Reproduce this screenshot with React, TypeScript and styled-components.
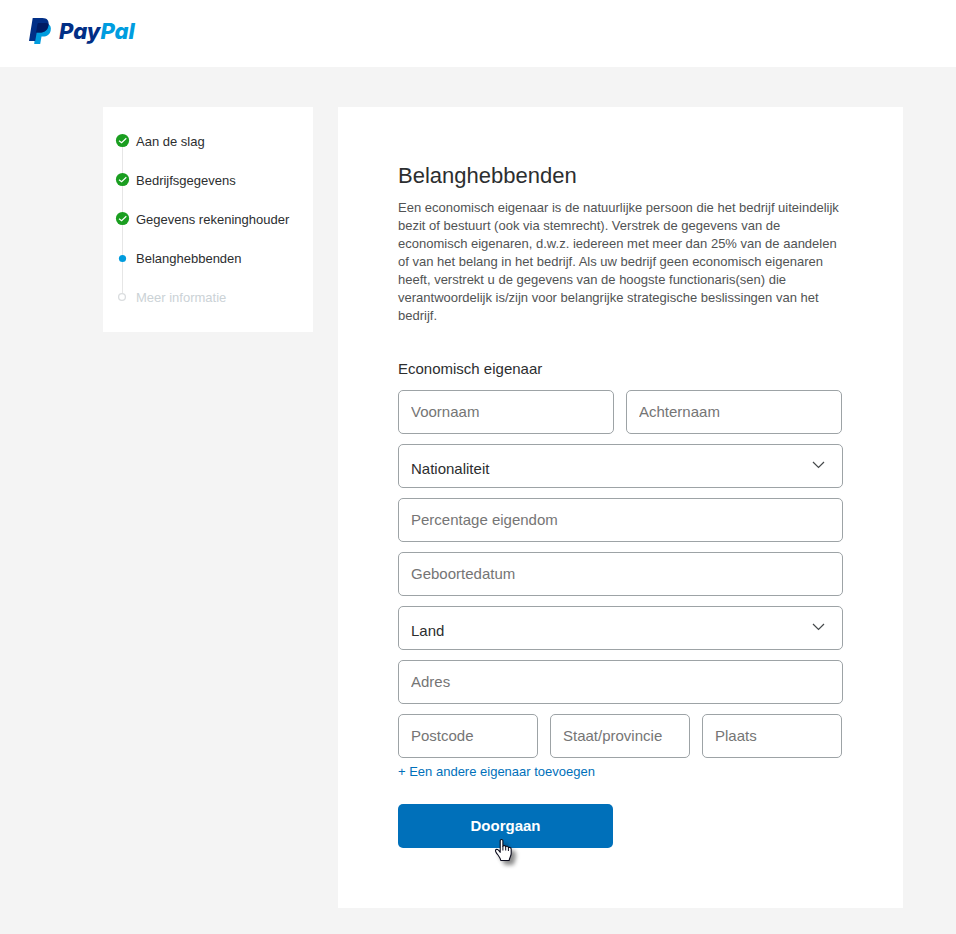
import React, { useState } from "react";
import styled, { createGlobalStyle } from "styled-components";

const GlobalStyle = createGlobalStyle`
  *, *::before, *::after { box-sizing: border-box; }
  body {
    margin: 0;
    background: #f4f4f4;
    color: #2c2e2f;
    font-family: "Liberation Sans", Arial, Helvetica, sans-serif;
    font-size: 15px;
  }
`;

const Header = styled.header`
  display: flex;
  align-items: center;
  height: 67px;
  padding: 0 28px 6px;
  background: #fff;
`;

const Brand = styled.a`
  display: flex;
  align-items: center;
  gap: 7px;
  text-decoration: none;
`;

const Wordmark = styled.span`
  font: italic 800 22px/28px Inter, "Open Sans", sans-serif;
  color: #012f86;
`;

const WordmarkAccent = styled.span`
  color: #009ddf;
`;

const Layout = styled.div`
  display: flex;
  align-items: flex-start;
  gap: 25px;
  padding: 40px 53px 26px 103px;
`;

const Sidebar = styled.nav`
  flex: 0 0 210px;
  padding: 15px 12px;
  background: #fff;
`;

const StepList = styled.ol`
  margin: 0;
  padding: 0;
  list-style: none;
`;

type StepState = "done" | "current" | "upcoming";

const Step = styled.li<{ $state: StepState }>`
  position: relative;
  display: flex;
  align-items: center;
  gap: 6px;
  height: 39px;
  font-size: 13px;
  color: ${(p) => (p.$state === "upcoming" ? "#cbd2d6" : "#2c2e2f")};

  &:not(:last-child)::after {
    content: "";
    position: absolute;
    left: 7px;
    top: 19px;
    width: 1px;
    height: 100%;
    background: #e6e6e6;
  }
`;

const Marker = styled.svg`
  position: relative;
  z-index: 1;
  flex: none;
  width: 15px;
  height: 15px;
  margin: 0 0 2px;
`;

const StepLabel = styled.span`
  line-height: 18px;
`;

const Panel = styled.main`
  flex: 1;
  min-width: 0;
  padding: 54px 60px 60px;
  background: #fff;
`;

const Title = styled.h1`
  margin: 0 0 8px;
  font-size: 22px;
  line-height: 30px;
  font-weight: 400;
`;

const Intro = styled.p`
  margin: 0;
  font-size: 13px;
  line-height: 18px;
  color: #515354;
`;

const OwnerGroup = styled.fieldset`
  display: grid;
  gap: 10px;
  min-width: 0;
  margin: 34px 0 0;
  padding: 0;
  border: 0;
`;

const GroupTitle = styled.legend`
  padding: 0;
  margin-bottom: 11px;
  font-size: 15px;
  line-height: 20px;
`;

const FieldRow = styled.div<{ $columns: number }>`
  display: grid;
  grid-template-columns: repeat(${(p) => p.$columns}, minmax(0, 1fr));
  gap: 12px;
  padding-right: 1px;
`;

const TextInput = styled.input`
  width: 100%;
  height: 44px;
  padding: 0 12px 2px;
  border: 1px solid #9da3a6;
  border-radius: 5px;
  background: #fff;
  color: #2c2e2f;
  font: inherit;

  &::placeholder {
    color: #757575;
    opacity: 1;
  }
`;

const SelectShell = styled.div`
  display: grid;
  align-items: center;
`;

const SelectInput = styled.select`
  grid-area: 1 / 1;
  width: 100%;
  height: 44px;
  padding: 5px 40px 0 12px;
  border: 1px solid #9da3a6;
  border-radius: 5px;
  background: #fff;
  color: #2c2e2f;
  font: inherit;
  appearance: none;
`;

const Chevron = styled.svg`
  grid-area: 1 / 1;
  justify-self: end;
  width: 14px;
  height: 10px;
  margin: 0 17px 2px 0;
  pointer-events: none;
`;

const AddOwner = styled.a`
  display: table;
  margin-top: 4px;
  font-size: 13px;
  line-height: 20px;
  color: #0070ba;
  text-decoration: none;
`;

const SubmitArea = styled.div`
  position: relative;
  width: 215px;
  margin-top: 22px;
`;

const SubmitButton = styled.button`
  display: block;
  width: 100%;
  height: 44px;
  padding: 0;
  border: 0;
  border-radius: 5px;
  background: #0070ba;
  color: #fff;
  font: 700 15px/20px "Liberation Sans", Arial, sans-serif;
  cursor: pointer;
`;

const Pointer = styled.svg`
  position: absolute;
  left: 96px;
  top: 34px;
  width: 28px;
  height: 32px;
  pointer-events: none;
  overflow: visible;
  filter: drop-shadow(4px 4px 2px rgba(0, 0, 0, 0.45));
`;

const steps: { label: string; state: StepState }[] = [
  { label: "Aan de slag", state: "done" },
  { label: "Bedrijfsgegevens", state: "done" },
  { label: "Gegevens rekeninghouder", state: "done" },
  { label: "Belanghebbenden", state: "current" },
  { label: "Meer informatie", state: "upcoming" },
];

function StepMarker({ state }: { state: StepState }) {
  return (
    <Marker viewBox="0 0 15 15" aria-hidden="true">
      {state === "done" && (
        <>
          <circle cx="7.5" cy="7.5" r="6.6" fill="#1a9e20" />
          <path d="M4 7.7 6.6 9.7 11.3 5.3" fill="none" stroke="#fff" strokeWidth="1.2" />
        </>
      )}
      {state === "current" && <circle cx="7.5" cy="8.5" r="3.6" fill="#009cde" />}
      {state === "upcoming" && (
        <circle cx="7" cy="8" r="3.4" fill="#fff" stroke="#dadddf" strokeWidth="1.3" />
      )}
    </Marker>
  );
}

function Monogram() {
  return (
    <svg width="24" height="28" viewBox="0 0 24 28" aria-hidden="true">
      <path
        d="M8.2 6.6H19.6C22.3 8 23.4 10.4 22.7 13.5 21.8 17.6 19 19.6 15 19.6H13.5L12.2 27.1H6.2Z"
        fill="#009cde"
      />
      <path
        d="M4.7 1.1H14.4C19.1 1.1 21.4 3.8 20.4 8.5 19.4 13.4 16.3 15.6 11.4 15.6H8.7L7.2 24.1H1Z"
        fill="#012f87"
      />
      <path
        d="M9.5 7.1C9.6 6.3 10.1 5.9 10.9 5.9H18C19 5.9 19.8 6.1 20.6 6.8 20.5 12.7 17.1 15.6 11.4 15.6H8Z"
        fill="#011c64"
      />
    </svg>
  );
}

function Field({ label }: { label: string }) {
  return <TextInput type="text" aria-label={label} placeholder={label} />;
}

function Dropdown({ label, options }: { label: string; options: string[] }) {
  const [value, setValue] = useState("");
  return (
    <SelectShell>
      <SelectInput aria-label={label} value={value} onChange={(e) => setValue(e.target.value)}>
        <option value="">{label}</option>
        {options.map((o) => (
          <option key={o}>{o}</option>
        ))}
      </SelectInput>
      <Chevron viewBox="0 0 14 10" aria-hidden="true">
        <path d="M1 2 6.5 7.5 12 2" fill="none" stroke="#45494b" strokeWidth="1.2" />
      </Chevron>
    </SelectShell>
  );
}

export default function App() {
  return (
    <>
      <GlobalStyle />
      <Header>
        <Brand href="#" aria-label="PayPal">
          <Monogram />
          <Wordmark>
            Pay<WordmarkAccent>Pal</WordmarkAccent>
          </Wordmark>
        </Brand>
      </Header>
      <Layout>
        <Sidebar>
          <StepList>
            {steps.map((s) => (
              <Step key={s.label} $state={s.state} aria-current={s.state === "current" ? "step" : undefined}>
                <StepMarker state={s.state} />
                <StepLabel>{s.label}</StepLabel>
              </Step>
            ))}
          </StepList>
        </Sidebar>
        <Panel>
          <Title>Belanghebbenden</Title>
          <Intro>
            Een economisch eigenaar is de natuurlijke persoon die het bedrijf uiteindelijk bezit of
            bestuurt (ook via stemrecht). Verstrek de gegevens van de economisch eigenaren, d.w.z.
            iedereen met meer dan 25% van de aandelen of van het belang in het bedrijf. Als uw
            bedrijf geen economisch eigenaren heeft, verstrekt u de gegevens van de hoogste
            functionaris(sen) die verantwoordelijk is/zijn voor belangrijke strategische
            beslissingen van het bedrijf.
          </Intro>
          <form onSubmit={(e) => e.preventDefault()}>
            <OwnerGroup>
              <GroupTitle>Economisch eigenaar</GroupTitle>
              <FieldRow $columns={2}>
                <Field label="Voornaam" />
                <Field label="Achternaam" />
              </FieldRow>
              <Dropdown label="Nationaliteit" options={["Nederlandse", "Belgische"]} />
              <Field label="Percentage eigendom" />
              <Field label="Geboortedatum" />
              <Dropdown label="Land" options={["Nederland", "België"]} />
              <Field label="Adres" />
              <FieldRow $columns={3}>
                <Field label="Postcode" />
                <Field label="Staat/provincie" />
                <Field label="Plaats" />
              </FieldRow>
            </OwnerGroup>
            <AddOwner href="#">+ Een andere eigenaar toevoegen</AddOwner>
            <SubmitArea>
              <SubmitButton type="submit">Doorgaan</SubmitButton>
              <Pointer viewBox="0 0 28 32" aria-hidden="true">
                <path
                  d="M6.2 2.5C6.2 1.1 8.9 1.1 8.9 2.5V8.2C9.4 7.2 11.6 7.4 11.7 8.7 12.4 7.9 14.3 8.2 14.4 9.6 15.3 9 17.2 9.5 17.2 11.2V15.5C17.2 18 15.6 19.2 15.2 22.5H6.8C6.4 19.4 4.1 17.4 2.2 14.6 0.6 12.2 1.9 10.8 3.6 11.6 4.8 12.2 5.4 13.2 6.2 14.3Z"
                  fill="#fff"
                  stroke="#0b0b1c"
                  strokeWidth="1.1"
                  strokeLinejoin="round"
                />
                <path d="M8.9 8V12.5M11.7 8.8V12.5M14.4 9.8V13" stroke="#0b0b1c" strokeWidth="1" />
              </Pointer>
            </SubmitArea>
          </form>
        </Panel>
      </Layout>
    </>
  );
}
